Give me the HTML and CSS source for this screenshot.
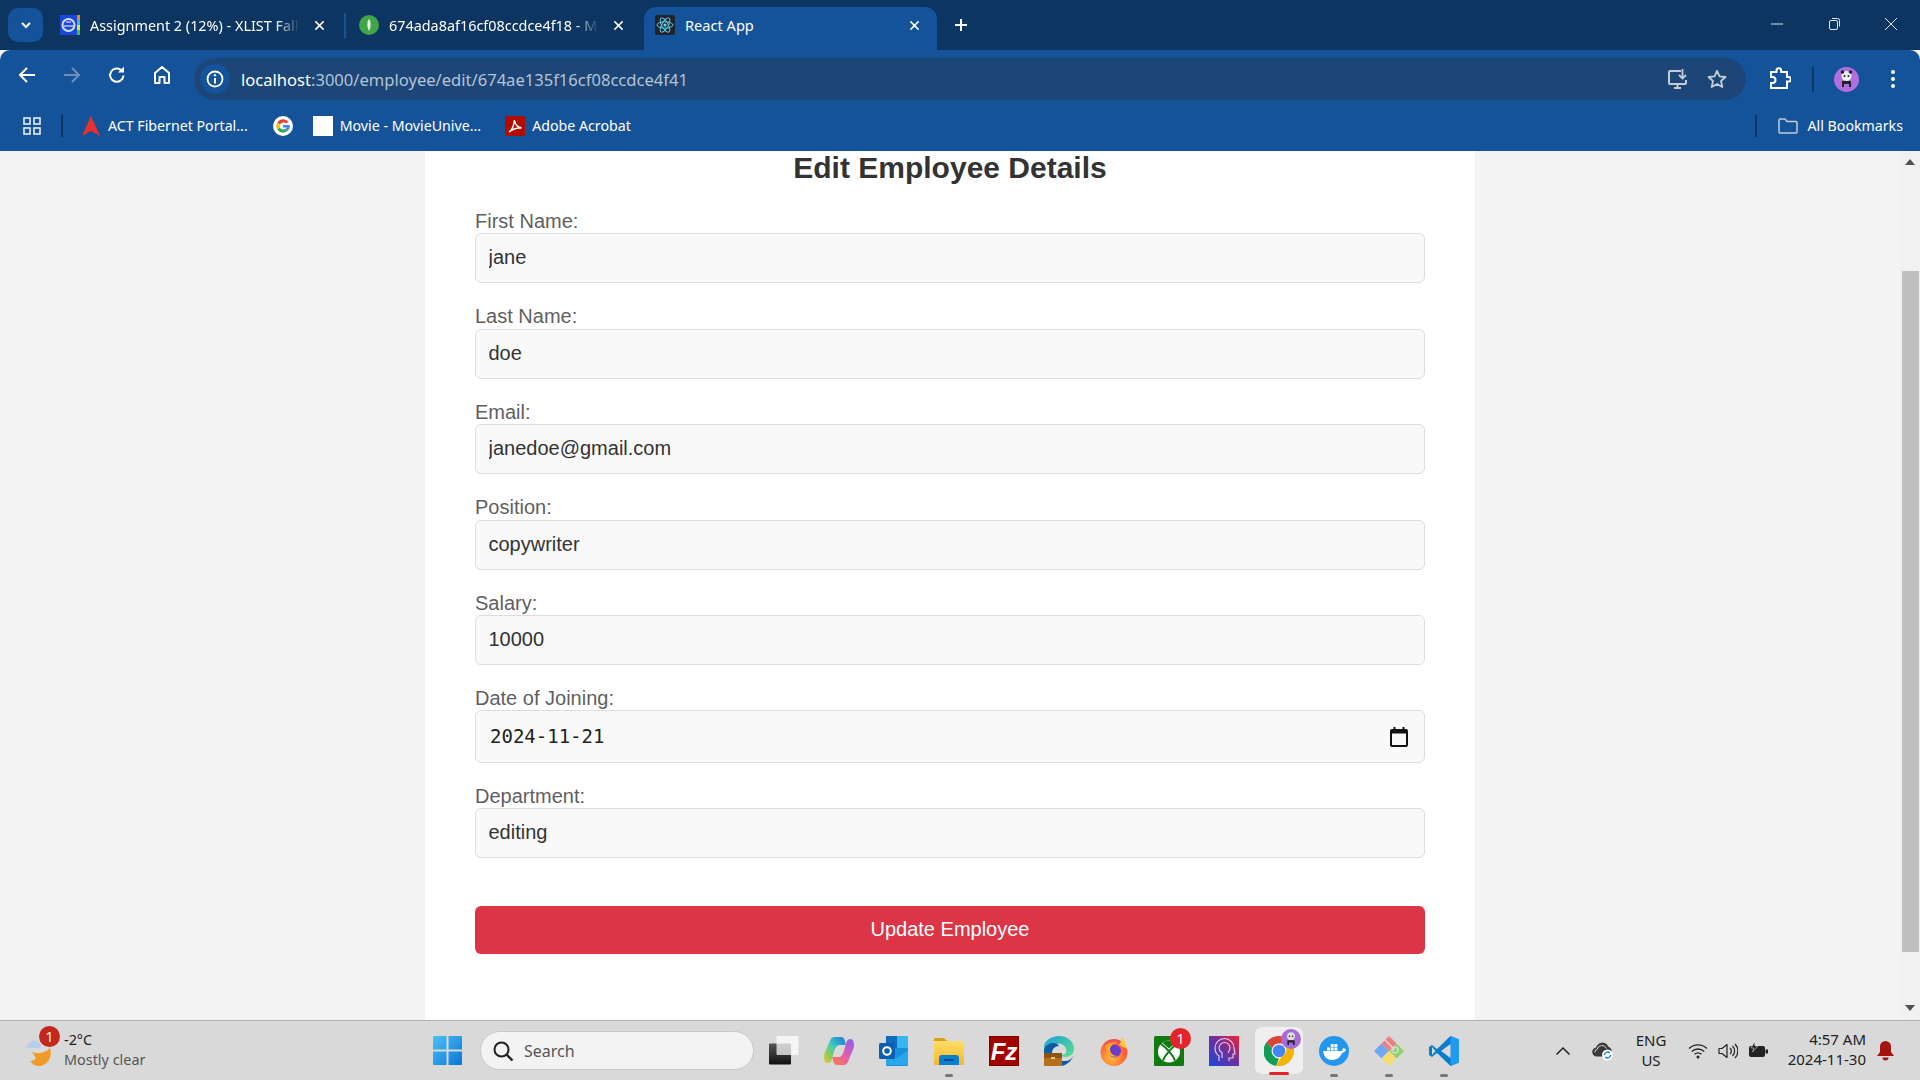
FILE: index.html
```html
<!DOCTYPE html>
<html lang="en">
  <head>
    <meta charset="UTF-8" />
    <meta name="viewport" content="width=device-width, initial-scale=1.0" />
    <title>React App</title>
    <link rel="stylesheet" href="styles.css">
  </head>
  <body>
    <header class="browser">
      <div class="tabstrip">
        <button class="tab-search">
          <svg width="14" height="14" viewBox="0 0 14 14"><path d="M3 5l4 4 4-4" fill="none" stroke="#fff" stroke-width="2"/></svg>
        </button>
        <div class="tab">
          <svg class="favicon" viewBox="0 0 20 20"><rect width="20" height="20" fill="#1c46d8"/><rect x="17" width="3" height="5" fill="#e8862a"/><rect x="17" y="5" width="3" height="5" fill="#35b5e8"/><rect x="17" y="10" width="3" height="5" fill="#e6df3a"/><rect x="17" y="15" width="3" height="5" fill="#3fbf4a"/><circle cx="8.5" cy="10" r="6" fill="none" stroke="#cfe0ff" stroke-width="2"/><path d="M4 11h9M6 7h5" stroke="#fff"/></svg>
          <span class="tab-title">Assignment 2 (12%) - XLIST Fall</span>
          <svg class="tab-close" viewBox="0 0 12 12"><path d="M1.5 1.5l9 9M10.5 1.5l-9 9" stroke="#fff" stroke-width="1.6"/></svg>
        </div>
        <span class="tab-sep"></span>
        <div class="tab">
          <svg class="favicon" viewBox="0 0 20 20"><circle cx="10" cy="10" r="10" fill="#3fa548"/><path d="M10 4c2.200 2.500 2.200 8 0 12-2.200-4-2.200-9.500 0-12z" fill="#e6f5d8"/></svg>
          <span class="tab-title">674ada8af16cf08ccdce4f18 - M</span>
          <svg class="tab-close" viewBox="0 0 12 12"><path d="M1.5 1.500l9 9M10.500 1.500l-9 9" stroke="#fff" stroke-width="1.6"/></svg>
        </div>
        <div class="tab tab-active">
          <svg class="favicon" viewBox="0 0 20 20"><rect width="20" height="20" rx="2" fill="#20232a"/><g fill="none" stroke="#61dafb" stroke-width=".9"><ellipse cx="10" cy="10" rx="8" ry="3.200"/><ellipse cx="10" cy="10" rx="8" ry="3.200" transform="rotate(60 10 10)"/><ellipse cx="10" cy="10" rx="8" ry="3.200" transform="rotate(120 10 10)"/></g><circle cx="10" cy="10" r="1.600" fill="#61dafb"/></svg>
          <span class="tab-title">React App</span>
          <svg class="tab-close" viewBox="0 0 12 12"><path d="M1.500 1.500l9 9M10.500 1.500l-9 9" stroke="#fff" stroke-width="1.6"/></svg>
        </div>
        <svg class="new-tab" width="14" height="14" viewBox="0 0 14 14"><path d="M7 1v12M1 7h12" stroke="#fff" stroke-width="2"/></svg>
        <div class="window-controls">
          <svg width="14" height="14" viewBox="0 0 14 14"><path d="M1 7h12" stroke="#dfe6ee" stroke-width="1"/></svg>
          <svg width="14" height="14" viewBox="0 0 14 14"><rect x="2.500" y="3.500" width="8" height="9" rx="1.500" fill="none" stroke="#dfe6ee"/><path d="M5 1.500h5.500a2 2 0 0 1 2 2v6" fill="none" stroke="#dfe6ee"/></svg>
          <svg width="14" height="14" viewBox="0 0 14 14"><path d="M1 1l12 12M13 1L1 13" stroke="#dfe6ee"/></svg>
        </div>
      </div>

      <div class="toolbar">
        <svg class="nav-icon" viewBox="0 0 20 20"><path d="M18 10H3M10 3l-7 7 7 7" fill="none" stroke="#fff" stroke-width="2"/></svg>
        <svg class="nav-icon" viewBox="0 0 20 20"><path d="M2 10h15M10 3l7 7-7 7" fill="none" stroke="#6f90bb" stroke-width="2"/></svg>
        <svg class="nav-icon" viewBox="0 0 20 20"><path d="M16.500 10.500a6.700 6.700 0 1 1-2-5.200" fill="none" stroke="#fff" stroke-width="2"/><path d="M17 1.500v6h-6z" fill="#fff"/></svg>
        <svg class="nav-icon" viewBox="0 0 20 20"><path d="M3 18V8l7-6 7 6v10h-4.500v-6h-5v6z" fill="none" stroke="#fff" stroke-width="2" stroke-linejoin="round"/></svg>
        <div class="omnibox">
          <span class="site-info">
            <svg width="18" height="18" viewBox="0 0 18 18"><circle cx="9" cy="9" r="7.500" fill="none" stroke="#fff" stroke-width="1.800"/><path d="M9 8v5.500" stroke="#fff" stroke-width="2"/><circle cx="9" cy="5.200" r="1.200" fill="#fff"/></svg>
          </span>
          <span class="url"><span class="url-host">localhost</span>:3000/employee/edit/674ae135f16cf08ccdce4f41</span>
          <svg class="omni-install" width="22" height="22" viewBox="0 0 22 22"><path d="M14 3H3a1 1 0 0 0-1 1v11a1 1 0 0 0 1 1h15a1 1 0 0 0 1-1v-3M7 20h7M10.500 16v4" fill="none" stroke="#c4ccd6" stroke-width="2"/><path d="M15.500 1v9M12 7l3.500 3.500L19 7" fill="none" stroke="#c4ccd6" stroke-width="1.800"/></svg>
          <svg class="omni-star" width="20" height="20" viewBox="0 0 20 20"><path d="M10 1.800l2.500 5.600 6 .6-4.500 4 1.300 6L10 15l-5.300 3 1.300-6-4.500-4 6-.6z" fill="none" stroke="#c4ccd6" stroke-width="1.800" stroke-linejoin="round"/></svg>
        </div>
        <svg class="ext-icon" width="22" height="24" viewBox="0 0 22 24"><path d="M2 5h5.500V3.500a2.300 2.300 0 0 1 4.600 0V5H18v5h1.500a2.300 2.300 0 0 1 0 4.600H18V21H2v-5h1.500a3 3 0 0 0 0-6H2z" fill="none" stroke="#fff" stroke-width="2"/></svg>
        <span class="tool-sep"></span>
        <svg class="avatar" width="25" height="25" viewBox="0 0 25 25"><circle cx="12.500" cy="12.500" r="12.500" fill="#b06fe0"/><circle cx="12.500" cy="9" r="5" fill="#eee"/><circle cx="8.500" cy="5" r="1.800" fill="#222"/><circle cx="16.500" cy="5" r="1.800" fill="#222"/><circle cx="10.500" cy="9" r="1" fill="#222"/><circle cx="14.500" cy="9" r="1" fill="#222"/><path d="M8 14h9v6h-2v-3h-5v3H8z" fill="#222"/></svg>
        <svg class="menu-dots" width="6" height="20" viewBox="0 0 6 20"><circle cx="3" cy="3" r="2" fill="#fff"/><circle cx="3" cy="10" r="2" fill="#fff"/><circle cx="3" cy="17" r="2" fill="#fff"/></svg>
      </div>

      <div class="bookmarks">
        <svg class="apps" width="18" height="18" viewBox="0 0 18 18"><g fill="none" stroke="#e8eef6" stroke-width="1.600"><rect x="1" y="1" width="6" height="6"/><rect x="11" y="1" width="6" height="6"/><rect x="1" y="11" width="6" height="6"/><rect x="11" y="11" width="6" height="6"/></g></svg>
        <span class="book-sep"></span>
        <a class="bookmark act">
          <svg width="20" height="20" viewBox="0 0 20 20"><path d="M10 0l9 20-9-5-9 5z" fill="#e8302f"/></svg>
          <span>ACT Fibernet Portal...</span>
        </a>
        <a class="bookmark google">
          <svg width="20" height="20" viewBox="0 0 20 20"><circle cx="10" cy="10" r="10" fill="#fff"/><path d="M15.500 6A6.700 6.700 0 0 0 4.300 6.500L7 8.500A3.600 3.600 0 0 1 13 7.600z" fill="#ea4335"/><path d="M4.300 6.500a6.800 6.800 0 0 0 0 7L7 11.500a3.500 3.500 0 0 1 0-3z" fill="#fbbc05"/><path d="M4.300 13.500a6.800 6.800 0 0 0 10.200 1.500L12 13a3.600 3.600 0 0 1-5-1.500z" fill="#34a853"/><path d="M16.700 9H10v2.500h3.800A3 3 0 0 1 12 13l2.500 2a6.500 6.500 0 0 0 2.200-6z" fill="#4285f4"/></svg>
        </a>
        <a class="bookmark movie">
          <span class="blank-favicon"></span>
          <span>Movie - MovieUnive...</span>
        </a>
        <a class="bookmark adobe">
          <svg width="20" height="20" viewBox="0 0 20 20"><rect width="20" height="20" rx="2" fill="#b30b00"/><path d="M4 16c3-2 5-7 5.500-12 .5 4 3 7 7 8-4-.5-8 .5-12.500 4z" fill="none" stroke="#fff" stroke-width="1.500"/></svg>
          <span>Adobe Acrobat</span>
        </a>
        <span class="book-sep book-sep-right"></span>
        <a class="bookmark all">
          <svg width="20" height="18" viewBox="0 0 20 18"><path d="M1 3a1 1 0 0 1 1-1h5l2 2.500h9a1 1 0 0 1 1 1V15a1 1 0 0 1-1 1H2a1 1 0 0 1-1-1z" fill="none" stroke="#c4ccd6" stroke-width="1.500"/></svg>
          <span>All Bookmarks</span>
        </a>
      </div>
    </header>

    <div class="viewport">
      <main class="page">
        <section class="card">
          <h2 class="card-title">Edit Employee Details</h2>
          <form>
            <div class="form-group">
              <label>First Name:</label>
              <input class="field" type="text" value="jane" />
            </div>
            <div class="form-group">
              <label>Last Name:</label>
              <input class="field" type="text" value="doe" />
            </div>
            <div class="form-group">
              <label>Email:</label>
              <input class="field" type="text" value="janedoe@gmail.com" />
            </div>
            <div class="form-group">
              <label>Position:</label>
              <input class="field" type="text" value="copywriter" />
            </div>
            <div class="form-group">
              <label>Salary:</label>
              <input class="field" type="text" value="10000" />
            </div>
            <div class="form-group">
              <label>Date of Joining:</label>
              <div class="date-field">
                <input class="date-value" type="text" value="2024-11-21" />
                <svg width="18" height="20" viewBox="0 0 18 20"><path d="M2 3h14a1 1 0 0 1 1 1v14a1 1 0 0 1-1 1H2a1 1 0 0 1-1-1V4a1 1 0 0 1 1-1z" fill="none" stroke="#111" stroke-width="2"/><path d="M1 5h16" stroke="#111" stroke-width="3"/><path d="M4.500 0v4M13.500 0v4" stroke="#111" stroke-width="2"/></svg>
              </div>
            </div>
            <div class="form-group">
              <label>Department:</label>
              <input class="field" type="text" value="editing" />
            </div>
            <button class="submit" type="button">Update Employee</button>
          </form>
        </section>
      </main>
      <div class="scrollbar">
        <span class="arrow-up"></span>
        <span class="thumb"></span>
        <span class="arrow-down"></span>
      </div>
    </div>

    <footer class="taskbar">
      <div class="weather">
        <span class="weather-icon">
          <svg width="30" height="34" viewBox="0 0 30 34"><path d="M7 18c8 3 14 0 18-4 3 9-3 18-11 18-4 0-7-2-9-5 3 0 5-1 6-3z" fill="#f09a2a"/><path d="M2 14a3.500 3.500 0 0 1 3-5 5 5 0 0 1 9 0 3 3 0 0 1 1 5z" fill="#b8cdea"/></svg>
          <span class="badge">1</span>
        </span>
        <div class="weather-text">
          <span class="temp">-2°C</span>
          <span class="cond">Mostly clear</span>
        </div>
      </div>

      <svg class="start" width="29" height="29" viewBox="0 0 29 29">
        <defs><linearGradient id="winGrad" x1="0" y1="0" x2="1" y2="1"><stop offset="0" stop-color="#4cc2f5"/><stop offset="1" stop-color="#0a74d6"/></linearGradient></defs>
        <path d="M0 1a1 1 0 0 1 1-1h12.500v13.500H0zM15.500 0H28a1 1 0 0 1 1 1v12.500H15.500zM0 15.500h13.500V29H1a1 1 0 0 1-1-1zM15.500 15.500H29V28a1 1 0 0 1-1 1H15.500z" fill="url(#winGrad)"/>
      </svg>

      <div class="search-box">
        <svg width="22" height="22" viewBox="0 0 22 22"><circle cx="9.500" cy="9.500" r="7" fill="none" stroke="#222" stroke-width="2"/><path d="M14.500 14.500l6 6" stroke="#222" stroke-width="2.400"/></svg>
        <span>Search</span>
      </div>

      <div class="task-icons">
        <span class="task-icon">
          <svg width="30" height="30" viewBox="0 0 30 30"><defs><linearGradient id="tvBack" x1="0" y1="0" x2="0" y2="1"><stop offset="0" stop-color="#555"/><stop offset="1" stop-color="#111"/></linearGradient></defs><rect x="0" y="7.500" width="22" height="21" rx="1" fill="url(#tvBack)"/><rect x="7.500" y="0" width="22" height="19" rx="1" fill="#fff" opacity=".72"/></svg>
        </span>
        <span class="task-icon">
          <svg width="30" height="30" viewBox="0 0 30 30"><defs><linearGradient id="coA" x1="1" y1="0" x2="0" y2="1"><stop offset="0" stop-color="#1a6fe0"/><stop offset=".45" stop-color="#3cc8c0"/><stop offset=".75" stop-color="#8fd050"/><stop offset="1" stop-color="#f4c430"/></linearGradient><linearGradient id="coB" x1="1" y1="0" x2="0" y2="1"><stop offset="0" stop-color="#f5853c"/><stop offset=".45" stop-color="#e85fa8"/><stop offset="1" stop-color="#8a5df0"/></linearGradient></defs><path d="M10 1h7c2 0 3 1 3.500 3L22 9h-6c-3 0-4.500 2-5.500 5l-3 10c-.5 2-2 3-4 3C1 27 0 24 0 21c0-4 3-9 5-14C6 3 8 1 10 1z" fill="url(#coA)"/><path d="M10 1h7c2 0 3 1 3.500 3L22 9h-6c-3 0-4.500 2-5.500 5l-3 10c-.5 2-2 3-4 3C1 27 0 24 0 21c0-4 3-9 5-14C6 3 8 1 10 1z" fill="url(#coB)" transform="rotate(180 15 15)"/></svg>
        </span>
        <span class="task-icon">
          <svg width="30" height="30" viewBox="0 0 30 30"><rect x="7" y="0" width="22" height="13" fill="#0f6cbd"/><rect x="18" y="0" width="11" height="13" fill="#38b6f0"/><rect x="7" y="12" width="22" height="18" rx="1" fill="#1490df"/><path d="M7 14l11 8 11-8v15H7z" fill="#28a8ea"/><rect x="0" y="7" width="16" height="16" rx="1.500" fill="#0c5fb0"/><circle cx="8" cy="15" r="3.800" fill="none" stroke="#fff" stroke-width="2"/></svg>
        </span>
        <span class="task-icon">
          <svg width="30" height="30" viewBox="0 0 30 30"><defs><linearGradient id="fold" x1="0" y1="0" x2="0" y2="1"><stop offset="0" stop-color="#ffdc6b"/><stop offset="1" stop-color="#f7b928"/></linearGradient></defs><path d="M0 3a1 1 0 0 1 1-1h9l3 3H0z" fill="#d9a013"/><rect x="0" y="5" width="30" height="24" rx="1" fill="url(#fold)"/><path d="M5 29v-7a3 3 0 0 1 3-3h14a3 3 0 0 1 3 3v7z" fill="#0a7fd0"/><path d="M10 24h10" stroke="#053f78" stroke-width="1.500"/></svg>
          <span class="pip"></span>
        </span>
        <span class="task-icon">
          <svg width="30" height="30" viewBox="0 0 30 30"><rect width="30" height="30" fill="#a30000"/><rect x=".5" y=".5" width="29" height="29" fill="none" stroke="#5c0000" stroke-dasharray="1.500 1.500"/><text x="15" y="24" text-anchor="middle" class="fz-text">Fz</text></svg>
        </span>
        <span class="task-icon">
          <svg width="30" height="30" viewBox="0 0 30 30"><defs><linearGradient id="edgeG" x1="0" y1="0" x2="1" y2="1"><stop offset="0" stop-color="#1d9fd8"/><stop offset="1" stop-color="#5ee08c"/></linearGradient></defs><path d="M15 0c9 0 15 6 15 13 0 5-4 8-9 8-2 0-4-1-4-2 5 0 6-3 5-6-1-4-5-6-9-5-4 0-7 3-8 5-1 3 0 6 1 8-3-1-6-6-6-10C0 5 7 0 15 0z" fill="url(#edgeG)"/><path d="M0 14c1-4 5-7 9-7 3 0 5 1 6 3-4 0-7 3-7 7H0z" fill="#0c59a4"/><path d="M30 19c-2 5-6 9-12 11v-5h3c4 0 7-2 9-6z" fill="#0c59a4"/><rect x="0" y="17" width="18" height="13" rx="1" fill="#b5701c"/><rect x="0" y="17" width="18" height="5" fill="#8c5414"/><rect x="7" y="21" width="4" height="2" fill="#f3c36b"/></svg>
        </span>
        <span class="task-icon">
          <svg width="30" height="30" viewBox="0 0 30 30"><defs><radialGradient id="ffG" cx=".4" cy=".7" r=".8"><stop offset="0" stop-color="#ffbd3f"/><stop offset=".6" stop-color="#ff6a33"/><stop offset="1" stop-color="#f0336a"/></radialGradient></defs><circle cx="15" cy="16.500" r="13.500" fill="url(#ffG)"/><path d="M22 0c2 3 6 7 6 13l-8-4c2-3 3-6 2-9z" fill="#ffc93c"/><circle cx="15.500" cy="15" r="6.500" fill="#6a3cc8"/><path d="M6 10c3-3 9-5 13-3-4 0-7 2-8 6 0 4 3 7 8 7-4 2-9 0-11-4-1-2-1-4-2-6z" fill="#ffa52e"/></svg>
        </span>
        <span class="task-icon">
          <svg width="30" height="30" viewBox="0 0 30 30"><rect width="30" height="30" rx="1.500" fill="#107c10"/><circle cx="15" cy="15.500" r="11" fill="#fff"/><path d="M8 6.500q7-4 14 0l-7 6z" fill="#107c10"/><path d="M6.500 7.500c4 3 11.500 10 14.500 17M23.500 7.500c-4 3-11.500 10-14.500 17" fill="none" stroke="#107c10" stroke-width="2"/></svg>
          <span class="badge badge-task">1</span>
        </span>
        <span class="task-icon">
          <svg width="30" height="30" viewBox="0 0 30 30"><defs><linearGradient id="obsG" x1="0" y1="1" x2="1" y2="0"><stop offset="0" stop-color="#1848e0"/><stop offset=".55" stop-color="#70309a"/><stop offset="1" stop-color="#f82230"/></linearGradient></defs><rect width="30" height="30" fill="url(#obsG)"/><path d="M10 25v-5c-3-2-4-5-4-8a9.500 9.500 0 0 1 19 0c0 2 1 4 1 6h-2v4h-4v3" fill="none" stroke="#e8d0ec" stroke-width="1.100"/><path d="M13 22v-5c-2-1.500-3-3-3-5a5.500 5.500 0 0 1 11 0c0 2-1 3.500-2 5" fill="none" stroke="#e8d0ec" stroke-width="1.100"/></svg>
        </span>
        <span class="task-icon task-active">
          <svg class="chrome-icon" width="30" height="30" viewBox="0 0 30 30"><path d="M15 0a15 15 0 0 1 13 7.500H15a7.500 7.500 0 0 0-7 5L2.600 6A15 15 0 0 1 15 0z" fill="#db4437"/><path d="M2.600 6L8 12.500a7.500 7.500 0 0 0 7 10L12 30A15 15 0 0 1 2.600 6z" fill="#0f9d58"/><path d="M28 7.500A15 15 0 0 1 12 29.700l6-9.700a7.500 7.500 0 0 0 2-12.500z" fill="#f4b400"/><circle cx="15" cy="15" r="6.200" fill="#4285f4"/></svg>
          <svg class="chrome-avatar" width="20" height="20" viewBox="0 0 25 25"><circle cx="12.500" cy="12.500" r="12.500" fill="#a56bd6"/><circle cx="12.500" cy="9" r="5" fill="#ddd"/><circle cx="10.500" cy="9" r="1" fill="#222"/><circle cx="14.500" cy="9" r="1" fill="#222"/><path d="M8 14h9v6h-2v-3h-5v3H8z" fill="#222"/></svg>
          <span class="pip pip-active"></span>
        </span>
        <span class="task-icon">
          <svg width="30" height="30" viewBox="0 0 30 30"><circle cx="15" cy="15" r="15" fill="#2396ed"/><path d="M4 15h18c1 0 2-1 2-3 1 0 3 1 3 2-1 2-3 3-4 3-2 5-6 7-10 7-5 0-8-3-9-9z" fill="#fff"/><path d="M8 11.500h3v3H8zM11.700 11.500h3v3h-3zM15.400 11.500h3v3h-3zM11.700 8h3v3h-3zM15.400 8h3v3h-3z" fill="#fff"/></svg>
          <span class="pip"></span>
        </span>
        <span class="task-icon">
          <svg width="30" height="30" viewBox="0 0 30 30"><path d="M0 15l7.500-7.500L15 15l-7.500 7.500z" fill="#6ea7f2"/><path d="M7.500 7.500L15 0l7.500 7.500L15 15z" fill="#ef7f7f"/><path d="M15 15l7.500-7.500L30 15l-7.500 7.500z" fill="#8fcf68"/><path d="M7.500 22.500L15 15l7.500 7.500L15 30z" fill="#f6dd72"/><path d="M11 4l10 10" stroke="#d9d9d9" stroke-width="1.500"/><circle cx="21" cy="14" r="3" fill="none" stroke="#d9d9d9" stroke-width="1.500"/></svg>
          <span class="pip"></span>
        </span>
        <span class="task-icon">
          <svg width="30" height="30" viewBox="0 0 30 30"><path d="M21.500 0L30 3.500v23L21.500 30 8 17l-5 4-3-2v-8l3-2 5 4z" fill="#0a7ccc"/><path d="M21.500 0L30 3.500v23L21.500 30z" fill="#1f9cf0"/><path d="M21.500 8v14L12 15z" fill="#d9d9d9"/><path d="M3 11l3.500 4L3 19z" fill="#d9d9d9"/></svg>
          <span class="pip"></span>
        </span>
      </div>

      <div class="tray">
        <svg class="tray-chevron" width="16" height="10" viewBox="0 0 16 10"><path d="M1.500 8.500L8 2l6.500 6.500" fill="none" stroke="#222" stroke-width="1.500"/></svg>
        <svg class="tray-cloud" width="22" height="20" viewBox="0 0 22 20"><path d="M5 15a4 4 0 0 1-.500-8A6 6 0 0 1 16 6a4 4 0 0 1 3 5v1H13l-2 3z" fill="#3a3a3a" stroke="#3a3a3a"/><path d="M3 11.500a2.500 2.500 0 0 1 2-3 5 5 0 0 1 9.500-1" fill="none" stroke="#d9d9d9"/><circle cx="15.500" cy="14" r="5.500" fill="#fff"/><path d="M12.500 14a3 3 0 0 1 5.200-2M18.500 14a3 3 0 0 1-5.200 2" fill="none" stroke="#1677d2" stroke-width="1.300"/></svg>
        <div class="lang"><span>ENG</span><span>US</span></div>
        <svg class="tray-wifi" width="20" height="16" viewBox="0 0 20 16"><path d="M1 5.500a13 13 0 0 1 18 0M3.800 8.500a9 9 0 0 1 12.400 0M6.600 11.300a5 5 0 0 1 6.800 0" fill="none" stroke="#222" stroke-width="1.300"/><circle cx="10" cy="14" r="1.500" fill="#222"/></svg>
        <svg class="tray-sound" width="20" height="16" viewBox="0 0 20 16"><path d="M1 5.500h3l5-4v13l-5-4H1z" fill="none" stroke="#222" stroke-width="1.200" stroke-linejoin="round"/><path d="M12 5a4 4 0 0 1 0 6M14.500 3a7 7 0 0 1 0 10M17 1a10 10 0 0 1 0 14" fill="none" stroke="#222" stroke-width="1.200"/></svg>
        <svg class="tray-battery" width="21" height="17" viewBox="0 0 21 17"><rect x="1" y="4" width="16" height="11" rx="2" fill="#222"/><rect x="17.500" y="7.500" width="2.500" height="4" fill="#222"/><path d="M6.500 0L3 6h3l-1.500 4L10 4H7z" fill="#222" stroke="#d9d9d9" stroke-width=".6"/></svg>
        <div class="clock"><span>4:57 AM</span><span>2024-11-30</span></div>
        <svg class="tray-bell" width="17" height="20" viewBox="0 0 17 20"><path d="M8.500 0a5.500 5.500 0 0 1 5.500 5.500V11l3 4H0l3-4V5.500A5.500 5.500 0 0 1 8.500 0z" fill="#a31310"/><path d="M5.500 16.500h6a3 3 0 0 1-6 0z" fill="#a31310"/></svg>
      </div>
    </footer>
  </body>
</html>
```

FILE: styles.css
```css
* {
  box-sizing: border-box;
}

html, body {
  height: 100%;
}

body {
  margin: 0;
  display: flex;
  flex-direction: column;
  overflow: hidden;
  font-family: "Liberation Sans", Arial, sans-serif;
  background-color: #f3f3f3;
}

svg {
  display: block;
  flex-shrink: 0;
}

/* browser chrome */

.browser {
  color: #fff;
  font-family: "Noto Sans", sans-serif;
}

.tabstrip {
  height: 50px;
  display: flex;
  align-items: flex-end;
  padding-left: 8px;
  background-color: #0c3562;
  font-size: 14.4px;
}

.tab-search {
  width: 35px;
  height: 34px;
  margin-bottom: 8px;
  margin-right: 7px;
  display: flex;
  align-items: center;
  justify-content: center;
  border: 0;
  padding: 0;
  border-radius: 10px;
  background-color: #14539a;
}

.tab {
  width: 294px;
  height: 43px;
  display: flex;
  align-items: center;
  padding: 0 17px 7px 10px;
  border-radius: 12px 12px 0 0;
}

.tab-active {
  width: 293px;
  margin-left: 1px;
  padding: 0 15px 7px 11px;
  background-color: #14539a;
  font-size: 14.6px;
}

.favicon {
  width: 20px;
  height: 20px;
  margin-right: 10px;
}

.tab-title {
  flex: 1;
  overflow: hidden;
  white-space: nowrap;
  -webkit-mask-image: linear-gradient(to right, #000 88%, transparent 100%);
  mask-image: linear-gradient(to right, #000 88%, transparent 100%);
}

.tab-active .tab-title {
  -webkit-mask-image: none;
  mask-image: none;
}

.tab-close {
  width: 11px;
  height: 11px;
  margin-left: 14px;
  margin-right: 2px;
}

.tab-sep {
  width: 2px;
  height: 25px;
  margin-right: 3px;
  margin-bottom: 12px;
  background-color: #14539a;
}

.new-tab {
  margin: 0 0 18px 17px;
}

.window-controls {
  margin-left: auto;
  display: flex;
  gap: 43px;
  padding-right: 22px;
  margin-bottom: 19px;
}

.toolbar {
  height: 50px;
  display: flex;
  align-items: center;
  background-color: #14539a;
  border-radius: 10px 10px 0 0;
}

.nav-icon {
  width: 20px;
  height: 20px;
  margin-left: 17px;
  margin-right: 8px;
}

.omnibox {
  width: 1552px;
  height: 42px;
  margin-left: 14px;
  margin-top: 8px;
  display: flex;
  align-items: center;
  padding-left: 6px;
  border-radius: 21px;
  background-color: #1c4677;
}

.site-info {
  width: 30px;
  height: 30px;
  display: flex;
  align-items: center;
  justify-content: center;
  border-radius: 50%;
  background-color: #14539a;
}

.url {
  flex: 1;
  margin-left: 11px;
  font-size: 16.57px;
  color: #b5c3d6;
  white-space: nowrap;
}

.url-host {
  color: #fff;
}

.omni-star {
  margin-left: 18px;
  margin-right: 19px;
}

.ext-icon {
  margin-left: 23px;
  margin-top: 8px;
}

.tool-sep {
  width: 2px;
  height: 25px;
  margin-left: 21px;
  margin-top: 8px;
  background-color: #0c3562;
}

.avatar {
  margin-left: 20px;
  margin-top: 8px;
}

.menu-dots {
  margin-left: 31px;
  margin-top: 8px;
}

.bookmarks {
  height: 51px;
  display: flex;
  align-items: center;
  padding-left: 23px;
  background-color: #14539a;
  font-size: 14.2px;
}

.book-sep {
  width: 2px;
  height: 22px;
  margin-left: 20px;
  background-color: #0c3562;
}

.bookmark {
  display: flex;
  align-items: center;
  gap: 8px;
  white-space: nowrap;
}

.act {
  margin-left: 18px;
  gap: 7px;
}

.google {
  margin-left: 25px;
}

.movie {
  margin-left: 20px;
  gap: 7px;
}

.blank-favicon {
  width: 20px;
  height: 20px;
  background-color: #fff;
}

.adobe {
  margin-left: 24px;
  gap: 7px;
}

.book-sep-right {
  margin-left: auto;
}

.all {
  margin-left: 21px;
  margin-right: 17px;
  gap: 10px;
}

/* page */

.viewport {
  flex: 1;
  display: flex;
  min-height: 0;
}

.page {
  flex: 1;
  display: flex;
  justify-content: center;
  overflow: hidden;
}

.card {
  width: 1050px;
  padding: 0 50px;
  background-color: #fff;
}

.card-title {
  margin: 0 0 25px;
  font-size: 30px;
  line-height: 34px;
  font-weight: bold;
  text-align: center;
  color: #333;
}

.form-group {
  margin-bottom: 22px;
}

.form-group label {
  display: block;
  height: 23.4px;
  font-size: 20px;
  line-height: 23px;
  color: #5f5f5f;
}

.field {
  display: block;
  width: 100%;
  height: 50px;
  padding: 0 12.5px 1px;
  font-family: inherit;
  font-size: 20px;
  color: #333;
  background-color: #f9f9f9;
  border: 1px solid #ddd;
  border-radius: 6px;
}

.date-field {
  height: 52.5px;
  display: flex;
  align-items: center;
  padding: 0 16px 0 14px;
  background-color: #f9f9f9;
  border: 1px solid #ddd;
  border-radius: 6px;
}

.date-value {
  flex: 1;
  padding: 0 0 1px;
  border: 0;
  background: none;
  font-family: "DejaVu Sans Mono", monospace;
  font-size: 19px;
  color: #222;
}

.submit {
  display: block;
  width: 100%;
  height: 48px;
  margin-top: 48px;
  padding: 0 0 2px;
  border: 0;
  border-radius: 6px;
  background-color: #dc3545;
  font-family: inherit;
  font-size: 20px;
  color: #fff;
}

.scrollbar {
  width: 20px;
  display: flex;
  flex-direction: column;
  align-items: center;
  padding-top: 8px;
  background-color: #f1f1f1;
}

.arrow-up {
  width: 0;
  height: 0;
  border-left: 5px solid transparent;
  border-right: 5px solid transparent;
  border-bottom: 6px solid #505050;
}

.thumb {
  width: 17px;
  height: 681px;
  margin-top: 106px;
  background-color: #c0c0c0;
}

.arrow-down {
  width: 0;
  height: 0;
  margin-top: auto;
  margin-bottom: 9px;
  border-left: 5px solid transparent;
  border-right: 5px solid transparent;
  border-top: 6px solid #505050;
}

/* taskbar */

.taskbar {
  height: 60px;
  display: flex;
  align-items: center;
  padding-left: 25px;
  background-color: #d9d9d9;
  border-top: 1px solid #b3b3b3;
  font-family: "Noto Sans", sans-serif;
  color: #222;
}

.weather {
  width: 408px;
  display: flex;
  align-items: center;
}

.weather-icon {
  position: relative;
  width: 39px;
}

.badge {
  position: absolute;
  top: -8px;
  left: 14px;
  width: 21px;
  height: 21px;
  border-radius: 50%;
  background-color: #c4271c;
  color: #fff;
  font-size: 14px;
  line-height: 21px;
  text-align: center;
}

.badge-task {
  top: 7px;
  left: auto;
  right: 5px;
  background-color: #e3242b;
}

.weather-text {
  display: flex;
  flex-direction: column;
  padding-bottom: 2px;
  font-size: 14.4px;
  line-height: 20px;
}

.cond {
  color: #555;
}

.search-box {
  width: 274px;
  height: 39px;
  margin-left: 18px;
  display: flex;
  align-items: center;
  gap: 10px;
  padding: 0 0 0 11px;
  border: 1px solid #c8c8c8;
  border-radius: 20px;
  background-color: #f3f3f3;
  font-size: 16px;
  color: #555;
}

.task-icons {
  display: flex;
  margin-left: 2px;
}

.task-icon {
  position: relative;
  width: 55px;
  height: 59px;
  display: flex;
  align-items: center;
  justify-content: center;
}

.task-active {
  background-color: #efefef;
  background-clip: content-box;
  padding: 6px 3.5px;
  border-radius: 12px;
}

.chrome-avatar {
  position: absolute;
  top: 8px;
  right: 5px;
}

.pip {
  position: absolute;
  bottom: 3px;
  left: 50%;
  width: 8px;
  height: 3px;
  margin-left: -4px;
  border-radius: 2px;
  background-color: #757575;
}

.pip-active {
  width: 20px;
  margin-left: -10px;
  background-color: #e3242b;
  bottom: 5px;
}

.fz-text {
  font-family: "Liberation Sans", sans-serif;
  font-size: 24px;
  font-weight: bold;
  font-style: italic;
  fill: #fff;
}

.tray {
  flex: 1;
  display: flex;
  align-items: center;
  font-size: 15px;
}

.tray-chevron {
  margin-left: 84px;
}

.tray-cloud {
  margin-left: 21px;
}

.lang {
  width: 50px;
  margin-left: 12px;
  padding-bottom: 1px;
  display: flex;
  flex-direction: column;
  align-items: center;
  line-height: 20px;
}

.tray-wifi {
  margin-left: 12px;
}

.tray-sound {
  margin-left: 10px;
}

.tray-battery {
  margin-left: 10px;
}

.clock {
  width: 97px;
  padding-bottom: 3px;
  display: flex;
  flex-direction: column;
  align-items: flex-end;
  line-height: 20px;
}

.tray-bell {
  margin-left: 11px;
}
```
